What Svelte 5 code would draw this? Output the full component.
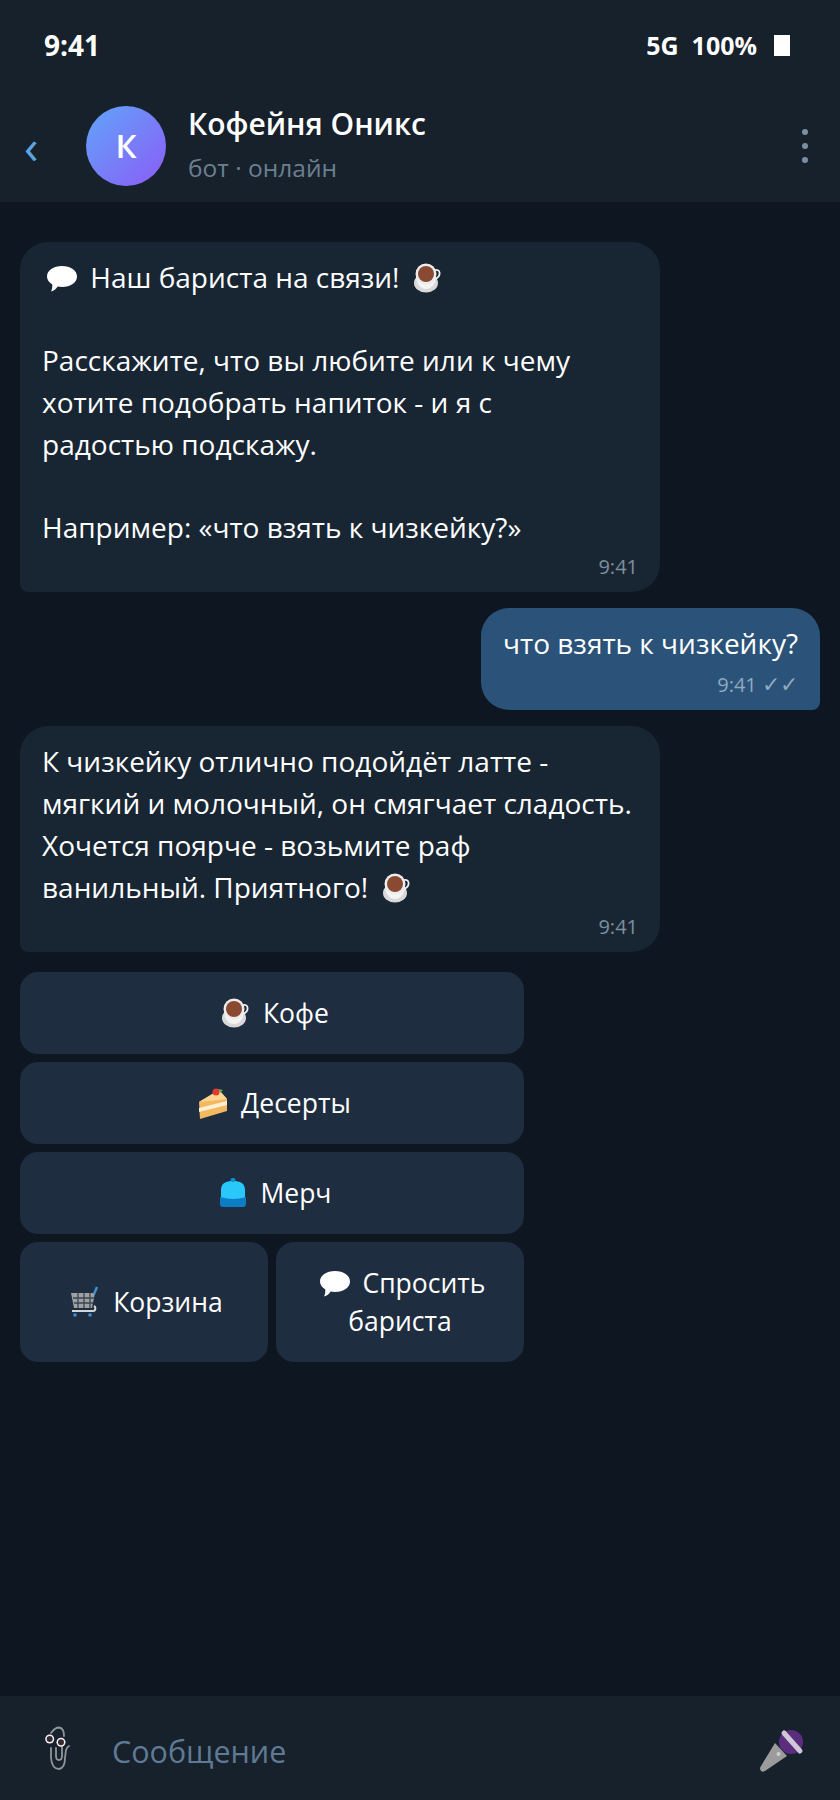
<script>
    const keyboardRows = [
        [{ icon: "coffee", label: "Кофе" }],
        [{ icon: "cake", label: "Десерты" }],
        [{ icon: "cap", label: "Мерч" }],
        [{ icon: "cart", label: "Корзина" }, { icon: "speech", label: "Спросить бариста" }],
    ];
</script>

{#snippet emoji(name)}
    <svg class="emoji" viewBox="0 0 32 32" aria-hidden="true">
        {#if name === "coffee"}
            <ellipse cx="15" cy="21" rx="12" ry="9.500" fill="#d9d9d9" />
            <path d="M5 13c0 8 4 14 10 14s10-6 10-14z" fill="#f4f4f4" />
            <path d="M24 8c4-1 5 2 4.500 4.500S25 17 23 17" fill="none" stroke="#f0f0f0" stroke-width="1.800" />
            <circle cx="15" cy="12" r="10.500" fill="#ececec" />
            <circle cx="15" cy="12" r="8" fill="#8a4a32" />
        {:else if name === "cake"}
            <path d="M2 15 L22 3 L30 12 L30 24 L3 32 Z" fill="#f4b860" />
            <path d="M2 15 L22 3 L30 12 Z" fill="#fcd592" />
            <path d="M2 21 L30 14 L30 18 L2 25 Z" fill="#fff0d5" />
            <circle cx="19" cy="5" r="3.500" fill="#e5392f" />
            <path d="M21 2l5 1-3 3z" fill="#6aa84f" />
        {:else if name === "cap"}
            <path d="M4 24V13C4 6 9 4 16 4s12 2 12 9v11z" fill="#29c8fb" />
            <rect x="13.500" y="1" width="5" height="4" rx="2" fill="#0d8fd0" />
            <path d="M3 20Q16 24 29 20V27Q29 30 26 30H6Q3 30 3 27Z" fill="#0c7cc4" />
        {:else if name === "cart"}
            <path d="M2 7h24l-3 15H5z" fill="#9da2a6" />
            <path d="M4 12h21M5 17h19M9 7v15M15 7v15M21 7v15" stroke="#3b4450" stroke-width="1.300" />
            <path d="M3 25h21c3 0 3-4 1-5" fill="none" stroke="#d6d6d6" stroke-width="2" />
            <path d="M25 8l3-7" stroke="#3e8fd0" stroke-width="2.500" />
            <circle cx="6" cy="29" r="1.800" fill="#3e8fd0" />
            <circle cx="21" cy="29" r="1.800" fill="#3e8fd0" />
        {:else if name === "speech"}
            <path d="M16 4c8.500 0 15 4.500 15 10.500S24.500 25 16 25c-1.500 0-3-.2-4.300-.5C10 27 8 29 5 29.500c1-2 1.400-4 1.300-7C3 20.500 1 17.800 1 14.500 1 8.500 7.500 4 16 4z" fill="#fff" />
        {/if}
    </svg>
{/snippet}

<div class="phone">
    <header class="top">
        <div class="status">
            <span class="clock">9:41</span>
            <div class="status-right">
                <span class="net">5G</span>
                <span class="battery">100%</span>
                <span class="battery-box"></span>
            </div>
        </div>
        <div class="chat-head">
            <span class="back">‹</span>
            <div class="avatar">К</div>
            <div class="who">
                <div class="name">Кофейня Оникс</div>
                <div class="state">бот · онлайн</div>
            </div>
            <div class="dots"><i></i><i></i><i></i></div>
        </div>
    </header>

    <main class="feed">
        <div class="bubble in">
            <p>{@render emoji("speech")} Наш бариста на связи! {@render emoji("coffee")}</p>
            <p class="gap">Расскажите, что вы любите или к чему хотите подобрать напиток - и я с<br />радостью подскажу.</p>
            <p class="gap">Например: «что взять к чизкейку?»</p>
            <div class="meta">9:41</div>
        </div>

        <div class="bubble out">
            <p>что взять к чизкейку?</p>
            <div class="meta">9:41 <span class="ticks">✓✓</span></div>
        </div>

        <div class="bubble in">
            <p>К чизкейку отлично подойдёт латте - мягкий и молочный, он смягчает сладость. Хочется поярче - возьмите раф ванильный. Приятного! {@render emoji("coffee")}</p>
            <div class="meta">9:41</div>
        </div>

        <div class="keyboard">
            {#each keyboardRows as row}
                <div class="kb-row">
                    {#each row as btn}
                        <button>{@render emoji(btn.icon)} {btn.label}</button>
                    {/each}
                </div>
            {/each}
        </div>
    </main>

    <footer class="composer">
        <svg class="clip" viewBox="25 25 28 50" aria-hidden="true">
            <path d="M32 35Q36 29.500 40 29.500Q45 30 45 38M32 50L32 60Q33 71 40 71Q46 70 46 60L47 52Q48 49 50 48M37 50L37 58Q37 62 40 62Q43 62 43 58L43 49" fill="none" stroke="#8f9599" stroke-width="1.800" stroke-linecap="round" />
            <circle cx="30.700" cy="41" r="4.500" fill="#f2f2f2" />
            <circle cx="30.700" cy="41" r="3" fill="#3a2a30" />
            <circle cx="42" cy="44.300" r="4.500" fill="#f2f2f2" />
            <circle cx="42" cy="44.300" r="3" fill="#3a2a30" />
        </svg>
        <span class="placeholder">Сообщение</span>
        <svg class="mic" viewBox="15 25 55 50" aria-hidden="true">
            <path d="M35 43L47 56L25 71Q21 73 20 69Q20 67 21 66Z" fill="#9b9b9b" />
            <circle cx="38.500" cy="54" r="2" fill="#cfcfcf" />
            <circle cx="51" cy="42" r="12" fill="#5c2d7e" />
            <path d="M44 33L60 51" stroke="#cfc8d8" stroke-width="5" stroke-linecap="round" />
        </svg>
    </footer>
</div>

<style>
    :global(body) {
        margin: 0;
        background: #0e1621;
    }

    .phone {
        width: 840px;
        height: 1800px;
        display: flex;
        flex-direction: column;
        background: #0e1621;
        color: #fff;
        font-family: "Open Sans", "Noto Sans", sans-serif;
        font-size: 28px;
        line-height: 42px;
    }

    .top {
        background: #17212b;
        height: 202px;
        box-sizing: border-box;
    }

    .status {
        display: flex;
        justify-content: space-between;
        align-items: center;
        height: 46px;
        padding: 22px 50px 0 44px;
    }

    .clock {
        font-size: 28px;
        font-weight: 700;
    }

    .status-right {
        display: flex;
        align-items: center;
        gap: 13px;
        font-size: 25px;
        font-weight: 700;
    }

    .battery-box {
        width: 16px;
        height: 21px;
        background: #fff;
        margin-left: 4px;
    }

    .chat-head {
        display: flex;
        align-items: center;
        height: 80px;
        margin-top: 38px;
        padding: 0 26px;
    }

    .back {
        width: 60px;
        color: #5ba4e0;
        font-size: 48px;
        line-height: 44px;
        margin-left: -2px;
        margin-right: 2px;
    }

    .avatar {
        width: 80px;
        height: 80px;
        border-radius: 50%;
        background: linear-gradient(135deg, #60a5fa, #8b5cf6);
        display: flex;
        align-items: center;
        justify-content: center;
        font-size: 33px;
        font-weight: 600;
    }

    .who {
        flex: 1;
        margin-left: 22px;
    }

    .name {
        font-size: 30px;
        font-weight: 600;
        line-height: 40px;
        margin-top: -2px;
    }

    .state {
        font-size: 24.500px;
        line-height: 36px;
        margin-top: 6px;
        color: #6c7f90;
    }

    .dots {
        display: flex;
        flex-direction: column;
        gap: 8px;
        margin-right: 6px;
    }

    .dots i {
        width: 6px;
        height: 6px;
        border-radius: 50%;
        background: #7a8fa3;
    }

    .feed {
        flex: 1;
        padding: 40px 20px 0;
        display: flex;
        flex-direction: column;
        gap: 16px;
    }

    .bubble {
        box-sizing: border-box;
        padding: 14px 22px 10px;
        border-radius: 28px;
    }

    .bubble p {
        margin: 0;
    }

    .bubble .gap {
        margin-top: 41px;
    }

    .in {
        width: 640px;
        background: #182533;
        border-bottom-left-radius: 8px;
    }

    .out {
        align-self: flex-end;
        background: #2b5278;
        border-bottom-right-radius: 8px;
    }

    .meta {
        margin-top: 4px;
        text-align: right;
        font-size: 20px;
        line-height: 30px;
        color: #7e8e9c;
    }

    .out .meta {
        margin-top: 6px;
        color: #8fa9c0;
    }

    .ticks {
        font-size: 22px;
        line-height: 20px;
        font-weight: 300;
    }

    .emoji {
        width: 32px;
        height: 32px;
        vertical-align: -6px;
        margin: 0 5px 0 4px;
    }

    .keyboard {
        width: 504px;
        display: flex;
        flex-direction: column;
        gap: 8px;
        margin-top: 4px;
    }

    .kb-row {
        display: flex;
        gap: 8px;
    }

    button {
        flex: 1 1 0;
        min-height: 82px;
        padding: 22px 16px;
        border: none;
        border-radius: 18px;
        background: #1e2d40;
        color: #fff;
        font: inherit;
        font-size: 26.500px;
        line-height: 38px;
    }

    .composer {
        height: 104px;
        background: #17212b;
        display: flex;
        align-items: center;
        padding: 0 30px 0 45px;
    }

    .clip {
        width: 28px;
        height: 50px;
        margin-left: -1px;
    }

    .placeholder {
        flex: 1;
        margin-left: 40px;
        padding-top: 6px;
        font-size: 30.500px;
        color: #5f7a94;
    }

    .mic {
        width: 55px;
        height: 50px;
        margin-top: 4px;
    }
</style>
